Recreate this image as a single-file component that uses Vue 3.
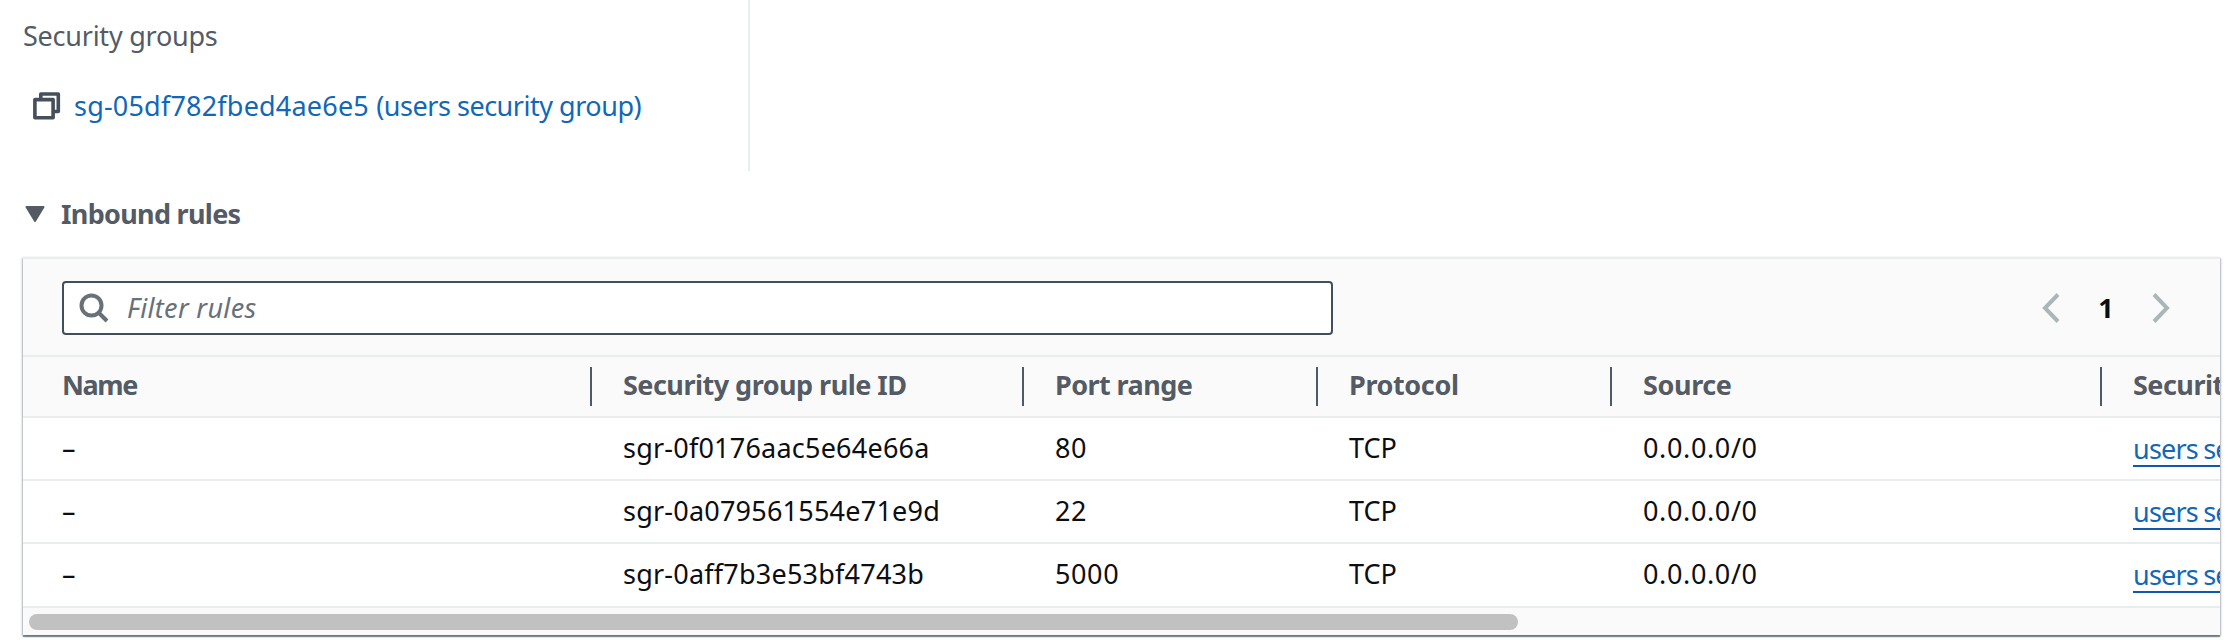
<script setup>
const columns = [
  { label: 'Name', cls: 'h-name' },
  { label: 'Security group rule ID', cls: 'h-id' },
  { label: 'Port range', cls: 'h-port' },
  { label: 'Protocol', cls: 'h-proto' },
  { label: 'Source', cls: 'h-source' },
  { label: 'Security groups', cls: 'h-groups' },
]
const rules = [
  { id: 'sgr-0f0176aac5e64e66a', port: '80' },
  { id: 'sgr-0a079561554e71e9d', port: '22' },
  { id: 'sgr-0aff7b3e53bf4743b', port: '5000' },
]
</script>

<template>
  <main class="page">
    <section class="details">
      <div class="label">Security groups</div>
      <div class="group">
        <svg class="copy" width="28" height="28" viewBox="0 0 28 28" fill="none" stroke="#46505b" stroke-width="3.6" stroke-linejoin="round">
          <path d="M7.8 7V2H25.3V19.5H20" />
          <rect x="1.9" y="7.6" width="18.2" height="18.2" />
        </svg>
        <a><span class="gid">sg-05df782fbed4ae6e5 </span><span class="gname">(users security group)</span></a>
      </div>
    </section>

    <div class="expander">
      <svg width="20" height="16" viewBox="0 0 20 16"><path d="M1.5 1H18.5L10 15Z" fill="#545b64" stroke="#545b64" stroke-width="2" stroke-linejoin="round" /></svg>
      <h3>Inbound rules</h3>
    </div>

    <section class="panel">
      <div class="toolbar">
        <div class="search">
          <svg width="30" height="30" viewBox="0 0 30 30" fill="none" stroke="#687078" stroke-width="4">
            <circle cx="12.5" cy="12.5" r="10" />
            <path d="M19.5 19.5L28 28" />
          </svg>
          <span>Filter rules</span>
        </div>
        <div class="pager">
          <svg width="18" height="30" viewBox="0 0 18 30" fill="none" stroke="#aab7b8" stroke-width="4"><path d="M16 1.5L3 15L16 28.5" /></svg>
          <b>1</b>
          <svg width="18" height="30" viewBox="0 0 18 30" fill="none" stroke="#aab7b8" stroke-width="4"><path d="M2 1.5L15 15L2 28.5" /></svg>
        </div>
      </div>
      <div class="scroller">
        <div class="row head">
          <div v-for="c in columns" :key="c.label" class="cell"><span :class="c.cls">{{ c.label }}</span></div>
        </div>
        <div v-for="r in rules" :key="r.id" class="row">
          <div class="cell"><span class="dash">–</span></div>
          <div class="cell"><span class="t-id">{{ r.id }}</span></div>
          <div class="cell"><span class="t-port">{{ r.port }}</span></div>
          <div class="cell"><span>TCP</span></div>
          <div class="cell"><span class="t-ip">0.0.0.0/0</span></div>
          <div class="cell"><a class="under">users security group</a></div>
        </div>
      </div>
      <div class="track"><div class="thumb"></div></div>
    </section>
  </main>
</template>

<style>
body { margin: 0; background: #fff; }
</style>

<style scoped>
.page {
  height: 640px;
  overflow: hidden;
  box-sizing: border-box;
  font: 27px/36px "Noto Sans", "Open Sans", sans-serif;
  color: #0c0e12;
  white-space: nowrap;
}
.details {
  box-sizing: border-box;
  width: 750px;
  height: 171px;
  padding: 18px 0 0 23px;
  border-right: 2px solid #eaeded;
}
.label { color: #545b64; letter-spacing: -.24px; }
.group {
  display: flex;
  align-items: center;
  gap: 13px;
  margin: 34px 0 0 10px;
  color: #1168b8;
}
.gid { letter-spacing: .2px; }
.gname { letter-spacing: -.48px; }
.expander {
  display: flex;
  align-items: center;
  gap: 16px;
  height: 36px;
  margin: 25px 0 25px 25px;
  color: #545b64;
}
h3 { margin: 0; font: inherit; font-weight: 700; letter-spacing: -.7px; }
.panel {
  width: 2197px;
  height: 378px;
  margin-left: 23px;
  box-sizing: border-box;
  border-top: 2px solid #eaeded;
  background: #fff;
  box-shadow: 0 2px 1px rgba(0, 28, 36, .4), 1px 1px 2px rgba(0, 28, 36, .25), -1px 1px 2px rgba(0, 28, 36, .25);
}
.toolbar {
  display: flex;
  justify-content: space-between;
  box-sizing: border-box;
  height: 98px;
  padding: 22px 50px 0 39px;
  background: #fafafa;
  border-bottom: 2px solid #eaeded;
}
.search {
  display: flex;
  align-items: center;
  gap: 18px;
  box-sizing: border-box;
  width: 1271px;
  height: 54px;
  padding-left: 15px;
  border: 2px solid #3f4f5e;
  border-radius: 4px;
  background: #fff;
  color: #687078;
  font-style: italic;
  letter-spacing: .33px;
}
.pager { display: flex; align-items: center; height: 54px; }
.pager b { width: 92px; text-align: center; }
.scroller { overflow: hidden; }
.row {
  display: grid;
  grid-template-columns: 569px 432px 294px 294px 490px 400px;
  box-sizing: border-box;
  height: 63px;
  border-bottom: 2px solid #eaeded;
}
.row.head {
  height: 61px;
  background: #fafafa;
  color: #545b64;
  font-weight: 700;
}
.row:last-child { height: 64px; }
.cell {
  display: flex;
  align-items: center;
  box-sizing: border-box;
  padding: 0 0 1px 31px;
}
.row:last-child .cell { padding-bottom: 2px; }
.cell:first-child { padding-left: 39px; }
.head .cell { padding-bottom: 3px; }
.head .cell:not(:last-child) {
  background: linear-gradient(#4d5a68, #4d5a68) right center / 2px 39px no-repeat;
}
.h-name { letter-spacing: -1.4px; }
.h-id, .h-groups { letter-spacing: -.52px; }
.h-port { letter-spacing: -.57px; }
.h-proto, .h-source { letter-spacing: -.38px; }
.t-id { letter-spacing: .22px; }
.t-port { letter-spacing: .6px; }
.t-ip { letter-spacing: .63px; }
.under {
  color: #1168b8;
  line-height: 33px;
  padding-top: 2px;
  letter-spacing: -.8px;
  word-spacing: -1px;
  border-bottom: 2px solid #0f57b0;
}
.track {
  height: 27px;
  padding: 6px 0 0 6px;
  box-sizing: border-box;
  background: #fafafa;
}
.thumb { width: 1489px; height: 16px; border-radius: 8px; background: #c1c1c1; }
</style>
